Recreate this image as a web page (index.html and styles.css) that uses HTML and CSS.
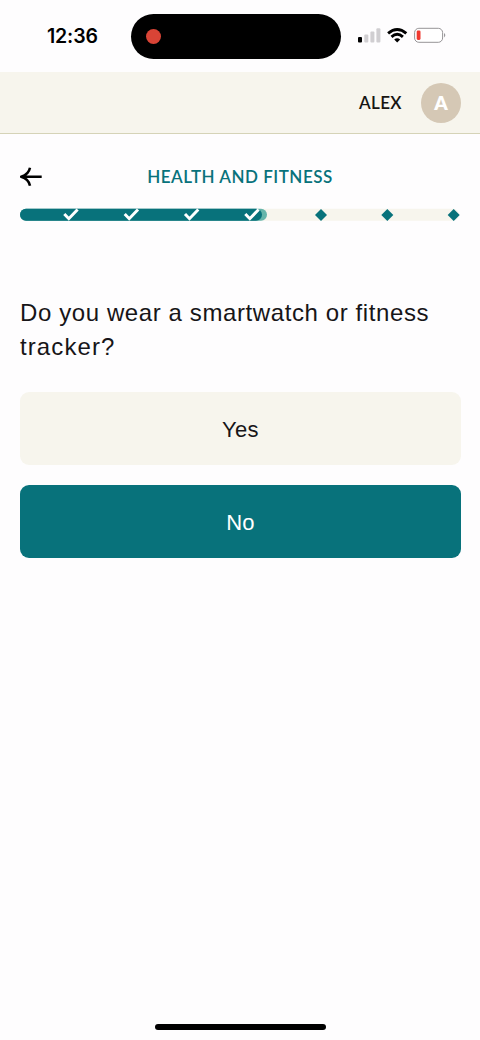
FILE: index.html
```html
<!DOCTYPE html>
<html lang="en">
<head>
<meta charset="utf-8">
<title>Health and Fitness</title>
<link rel="stylesheet" href="styles.css">
</head>
<body>
<div class="screen">
  <div class="status">
    <div class="time"><span>12:36</span></div>
    <div class="island"><span class="record"></span></div>
    <svg class="indicators" width="90" height="20" viewBox="0 0 90 20">
      <rect x="0" y="11" width="4" height="5.5" rx="1"/>
      <g fill="#d0ced1"><rect x="6.3" y="8.5" width="4" height="8" rx="1"/><rect x="12.4" y="5.5" width="4" height="11" rx="1"/><rect x="18.4" y="2.3" width="4" height="14.2" rx="1"/></g>
      <g fill="none" stroke="#000" stroke-width="2.9"><path d="M30.1 7.3Q39.2-.5 48.3 7.3"/><path d="M33.5 10.8Q39.2 5.8 44.9 10.8"/></g>
      <path d="M36.2 13.4Q39.2 10.9 42.2 13.4L39.2 16.5Z"/>
      <rect x="56.6" y="2.3" width="28" height="14" rx="4.3" fill="#fff" stroke="#969497"/>
      <rect x="58.7" y="4.5" width="3.8" height="9.4" rx="1.3" fill="#f0392f"/>
      <path d="M86.2 7.1Q88.3 9.3 86.2 11.5Z" fill="#858386"/>
    </svg>
  </div>
  <header class="account"><span class="name">ALEX</span><span class="avatar">A</span></header>
  <main class="content">
    <div class="nav">
      <svg class="back" width="24" height="22" viewBox="0 0 24 22"><path d="M21.7 10.8H2M10 1.8C9.2 6 6.8 9.1 1.2 10.8C6.8 12.5 9.2 15.6 10 19.8" fill="none" stroke="#000" stroke-width="2.5" stroke-linejoin="round"/></svg>
      <h1 class="title">HEALTH AND FITNESS</h1>
    </div>
    <svg class="progress" width="441" height="14" viewBox="0 0 441 14">
      <rect y=".8" width="439" height="12" rx="6" fill="#f7f5ed"/>
      <rect y=".8" width="247" height="12" rx="6" fill="#65b5aa"/>
      <rect y=".8" width="242" height="12" rx="6" fill="#08727b"/>
      <g fill="none" stroke="#fff" stroke-width="3">
        <path d="M44.3 6L48.8 10.7L57.6 1.5"/><path d="M104.7 6L109.2 10.7L118 1.5"/><path d="M165 6L169.5 10.7L178.3 1.5"/><path d="M225.3 6L229.8 10.7L238.6 1.5"/>
      </g>
      <g fill="#08727b"><path d="M301 1L307 7L301 13L295 7Z"/><path d="M367.3 1L373.3 7L367.3 13L361.3 7Z"/><path d="M433.7 1L439.7 7L433.7 13L427.7 7Z"/></g>
    </svg>
    <h2 class="question"><span class="lead">Do you wear a smartwatch or fitness</span><br>tracker?</h2>
    <div class="answers">
      <button class="answer">Yes</button>
      <button class="answer selected">No</button>
    </div>
  </main>
  <div class="home"></div>
</div>
</body>
</html>
```
FILE: styles.css
```css
* { box-sizing: border-box; }
body { margin: 0; background: #fefdfe; color: #171518; font-family: "Liberation Sans", sans-serif; }
.screen { width: 480px; height: 1040px; display: flex; flex-direction: column; }
.status { height: 72px; flex: none; display: grid; grid-template-columns: 131px 210px 1fr; align-items: center; }
.time { padding-left: 47px; font: 600 19.5px/24px Inter, sans-serif; color: #000; letter-spacing: -.15px; }
.island { height: 45px; border-radius: 23px; background: #000; display: flex; align-items: center; padding-left: 15px; }
.record { width: 15px; height: 15px; border-radius: 50%; background: #d94436; }
.indicators { margin-left: 16.5px; }
.account { height: 62px; flex: none; display: flex; align-items: center; justify-content: flex-end; gap: 19px; padding-right: 19px; background: #f7f5ed; border-bottom: 1px solid #d5d3b7; font-family: Lato, sans-serif; }
.name { font-size: 17px; font-weight: 600; letter-spacing: .4px; color: #171512; }
.avatar { width: 40px; height: 40px; border-radius: 50%; background: #d5c8b5; color: #fff; display: grid; place-items: center; font-size: 19px; font-weight: 800; }
.content { flex: 1; padding: 28px 20px 0; }
.nav { display: grid; grid-template-columns: 24px 1fr 24px; align-items: center; height: 29px; }
.title { margin: 0; text-align: center; color: #08727b; font-family: Lato, sans-serif; font-size: 17px; line-height: 24px; font-weight: 600; letter-spacing: .5px; white-space: nowrap; }
.progress { display: block; margin-top: 17px; }
.question { margin: 74px 0 0; font-size: 24px; font-weight: 400; line-height: 34px; letter-spacing: 1.1px; white-space: nowrap; }
.lead { letter-spacing: .6px; }
.answers { display: grid; gap: 20px; margin-top: 28px; }
.answer { height: 73px; width: 441px; padding: 3px 0 0; border: 0; border-radius: 9px; background: #f7f5ed; color: #171518; font: 400 22px "Liberation Sans", sans-serif; letter-spacing: .3px; }
.answer.selected { background: #08727b; color: #fff; }
.home { width: 171px; height: 6px; margin: 0 auto 10px; border-radius: 3px; background: #000; }
```
